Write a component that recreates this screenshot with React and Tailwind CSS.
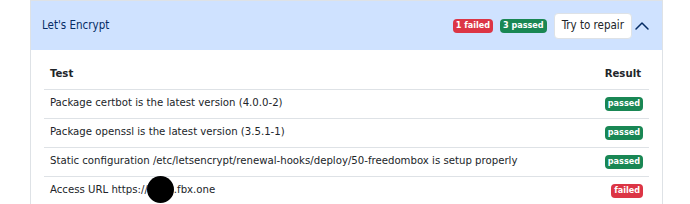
import { ChevronUp } from "lucide-react";

const rows = [
    { test: "Package certbot is the latest version (4.0.0-2)", result: "passed" },
    { test: "Package openssl is the latest version (3.5.1-1)", result: "passed" },
    { test: "Static configuration /etc/letsencrypt/renewal-hooks/deploy/50-freedombox is setup properly", result: "passed" },
    { test: "access", result: "failed" },
];

const Badge = ({ kind, children }) => {
    const color = kind === "failed" ? "bg-[#dc3545]" : "bg-[#198754]";
    return (
        <span className={`${color} inline-flex h-[14px] items-center rounded-[4px] px-[3px] text-[9px] font-bold leading-none text-white`}>
            {children}
        </span>
    );
};

// the redacted host is covered by a black blob in the screenshot
const TestName = ({ text }) => {
    if (text !== "access") return text;
    return (
        <span>
            Access URL https://
            <span className="relative inline-block w-[26px] align-middle">
                <span className="absolute left-[-1px] top-[-14px] h-[27px] w-[27px] rounded-full bg-black" />
            </span>
            .fbx.one
        </span>
    );
};

export default function App() {
    return (
        <div className="h-[204px] w-[690px] overflow-hidden bg-white font-['DejaVu_Sans_Condensed','DejaVu_Sans',sans-serif] text-[#212529]">
            <div className="ml-[30px] w-[633px] border border-b-0 border-[#dee2e6]">
                <div className="flex h-[49px] items-center bg-[#cfe2ff] pl-[11px] pr-[8px]">
                    <span className="text-[11.5px] text-[#052c65]">Let's Encrypt</span>
                    <div className="ml-auto flex items-center gap-[7px]">
                        <Badge kind="failed">1 failed</Badge>
                        <Badge kind="passed">3 passed</Badge>
                        <button className="h-[26px] rounded-[4px] border border-[#dee2e6] bg-white px-[7px] text-[11.5px] text-[#212529]">
                            Try to repair
                        </button>
                        <ChevronUp className="ml-[-9px] h-[24px] w-[24px] text-[#052c65]" strokeWidth={1.5} />
                    </div>
                </div>
                <div className="px-[13px] pt-[10px]">
                    <table className="w-full border-collapse text-[11.3px]">
                        <thead>
                            <tr className="h-[29px] border-b border-[#dee2e6]">
                                <th className="px-[6px] text-left font-bold">Test</th>
                                <th className="px-[8px] text-right font-bold">Result</th>
                            </tr>
                        </thead>
                        <tbody>
                            {rows.map((row, i) => (
                                <tr key={i} className="h-[29px] border-b border-[#dee2e6]">
                                    <td className="px-[6px]"><TestName text={row.test} /></td>
                                    <td className="px-[6px] text-right">
                                        <Badge kind={row.result}>{row.result}</Badge>
                                    </td>
                                </tr>
                            ))}
                        </tbody>
                    </table>
                </div>
            </div>
        </div>
    );
}
